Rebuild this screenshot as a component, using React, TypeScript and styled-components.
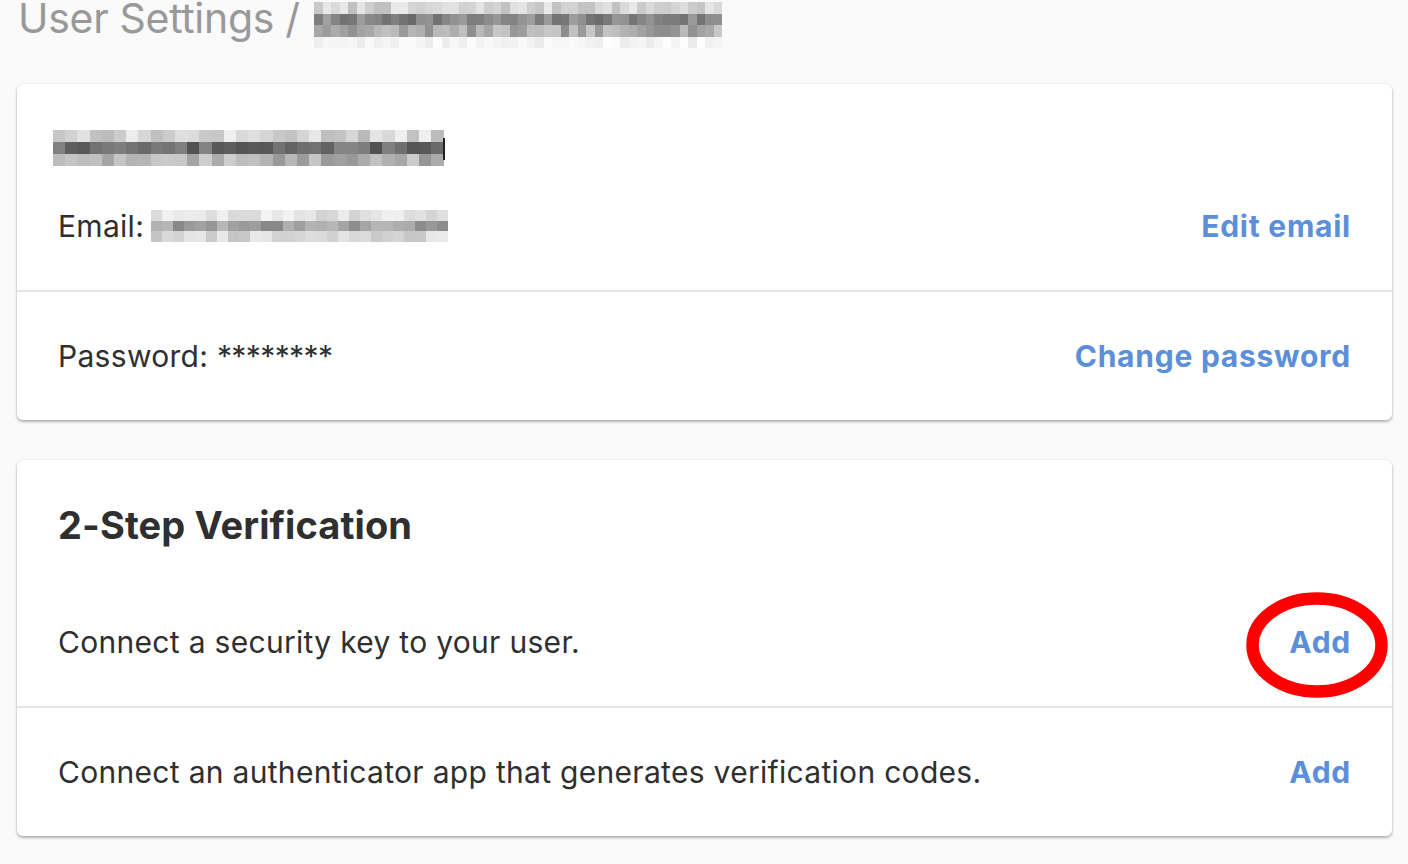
import React from 'react';
import styled, { createGlobalStyle } from 'styled-components';

const Global = createGlobalStyle`
  html, body { margin: 0; padding: 0; background: #fafafa; }
  body {
    font-family: Inter, "Noto Sans", "Liberation Sans", sans-serif;
    color: #2f2f2f;
    -webkit-font-smoothing: antialiased;
  }
`;

const Page = styled.div`
  padding: 0 16px 40px 17px;
`;

const Header = styled.header`
  display: flex;
  align-items: flex-start;
  gap: 14px;
  height: 84px;
  padding-left: 1px;
`;

const Title = styled.h1`
  margin: -2px 0 0;
  font-size: 41px;
  line-height: 41px;
  font-weight: 400;
  color: #999;
  letter-spacing: -0.3px;
  white-space: nowrap;
`;

const Card = styled.section`
  background: #fff;
  border-radius: 6px;
  box-shadow: 0 2px 3px rgba(0, 0, 0, 0.28), 0 0 0 1px rgba(0, 0, 0, 0.04);
  & + & {
    margin-top: 40px;
  }
`;

const CardHeader = styled.div`
  padding: 40px 41px 28px;
`;

const Heading = styled.h2`
  margin: 0;
  font-size: 38px;
  line-height: 50px;
  font-weight: 700;
  color: #2f2f2f;
  letter-spacing: 0.1px;
`;

const Row = styled.div<{ $top?: boolean }>`
  display: flex;
  justify-content: space-between;
  align-items: ${(p) => (p.$top ? 'flex-end' : 'center')};
  padding: 40px 41px;
  & + & {
    border-top: 2px solid #e6e6e6;
  }
`;

const Stack = styled.div`
  display: flex;
  flex-direction: column;
  gap: 30px;
`;

const Line = styled.div`
  display: flex;
  align-items: center;
  gap: 7px;
  font-size: 30px;
  line-height: 48px;
  height: 48px;
  letter-spacing: 0.3px;
  white-space: nowrap;
`;

const Stars = styled.span`
  letter-spacing: -0.6px;
`;

const Action = styled.a`
  position: relative;
  font-size: 30px;
  line-height: 48px;
  font-weight: 700;
  color: #5b8fd9;
  letter-spacing: 0.75px;
  text-decoration: none;
  cursor: pointer;
  white-space: nowrap;
`;

const Circle = styled.svg`
  position: absolute;
  left: calc(50% - 74px);
  top: calc(50% - 50px);
  pointer-events: none;
  overflow: visible;
`;

type Profile = [number, number][];

function rng(seed: number) {
  let s = seed >>> 0;
  return () => {
    s = (s * 1664525 + 1013904223) >>> 0;
    return s / 4294967296;
  };
}

const Pixelated: React.FC<{
  cols: number;
  cellW: number;
  cellH: number;
  profile: Profile;
  seed: number;
  cursor?: boolean;
}> = ({ cols, cellW, cellH, profile, seed, cursor }) => {
  const r = rng(seed);
  const w = cols * cellW;
  const h = profile.length * cellH;
  const rects: React.ReactNode[] = [];
  profile.forEach(([lo, hi], ri) => {
    for (let c = 0; c < cols; c++) {
      const v = Math.round(lo + (hi - lo) * r());
      rects.push(
        <rect
          key={`${ri}-${c}`}
          x={c * cellW}
          y={ri * cellH}
          width={cellW + 0.5}
          height={cellH}
          fill={`rgb(${v},${v},${v})`}
        />
      );
    }
  });
  return (
    <svg width={w + (cursor ? 3 : 0)} height={h} shapeRendering="crispEdges" style={{ display: 'block' }}>
      {rects}
      {cursor && <rect x={w} y={cellH * 0.7} width={2} height={cellH * 1.8} fill="#222" />}
    </svg>
  );
};

const TitleBlur = styled.div`
  margin-top: 2px;
`;

const NameBlur = styled.div`
  margin-left: -5px;
`;

export default function App() {
  return (
    <>
      <Global />
      <Page>
        <Header>
          <Title>User Settings /</Title>
          <TitleBlur>
            <Pixelated
              cols={48}
              cellW={8.5}
              cellH={11.5}
              seed={7}
              profile={[
                [190, 235],
                [105, 160],
                [140, 200],
                [235, 255],
              ]}
            />
          </TitleBlur>
        </Header>

        <Card>
          <Row $top>
            <Stack>
              <Line>
                <NameBlur>
                  <Pixelated
                    cols={32}
                    cellW={12.2}
                    cellH={12}
                    seed={13}
                    cursor
                    profile={[
                      [185, 240],
                      [80, 135],
                      [150, 205],
                    ]}
                  />
                </NameBlur>
              </Line>
              <Line>
                <span>Email:</span>
                <Pixelated
                  cols={27}
                  cellW={11}
                  cellH={10.5}
                  seed={29}
                  profile={[
                    [210, 245],
                    [135, 185],
                    [195, 235],
                  ]}
                />
              </Line>
            </Stack>
            <Action>Edit email</Action>
          </Row>
          <Row>
            <Line>
              <span>
                Password: <Stars>********</Stars>
              </span>
            </Line>
            <Action>Change password</Action>
          </Row>
        </Card>

        <Card>
          <CardHeader>
            <Heading>2-Step Verification</Heading>
          </CardHeader>
          <Row>
            <Line>Connect a security key to your user.</Line>
            <Action>
              Add
              <Circle width="142" height="106" viewBox="0 0 142 106">
                <ellipse cx="71" cy="53" rx="64.5" ry="46.5" fill="none" stroke="#ff0000" strokeWidth="12.5" />
              </Circle>
            </Action>
          </Row>
          <Row>
            <Line>Connect an authenticator app that generates verification codes.</Line>
            <Action>Add</Action>
          </Row>
        </Card>
      </Page>
    </>
  );
}
